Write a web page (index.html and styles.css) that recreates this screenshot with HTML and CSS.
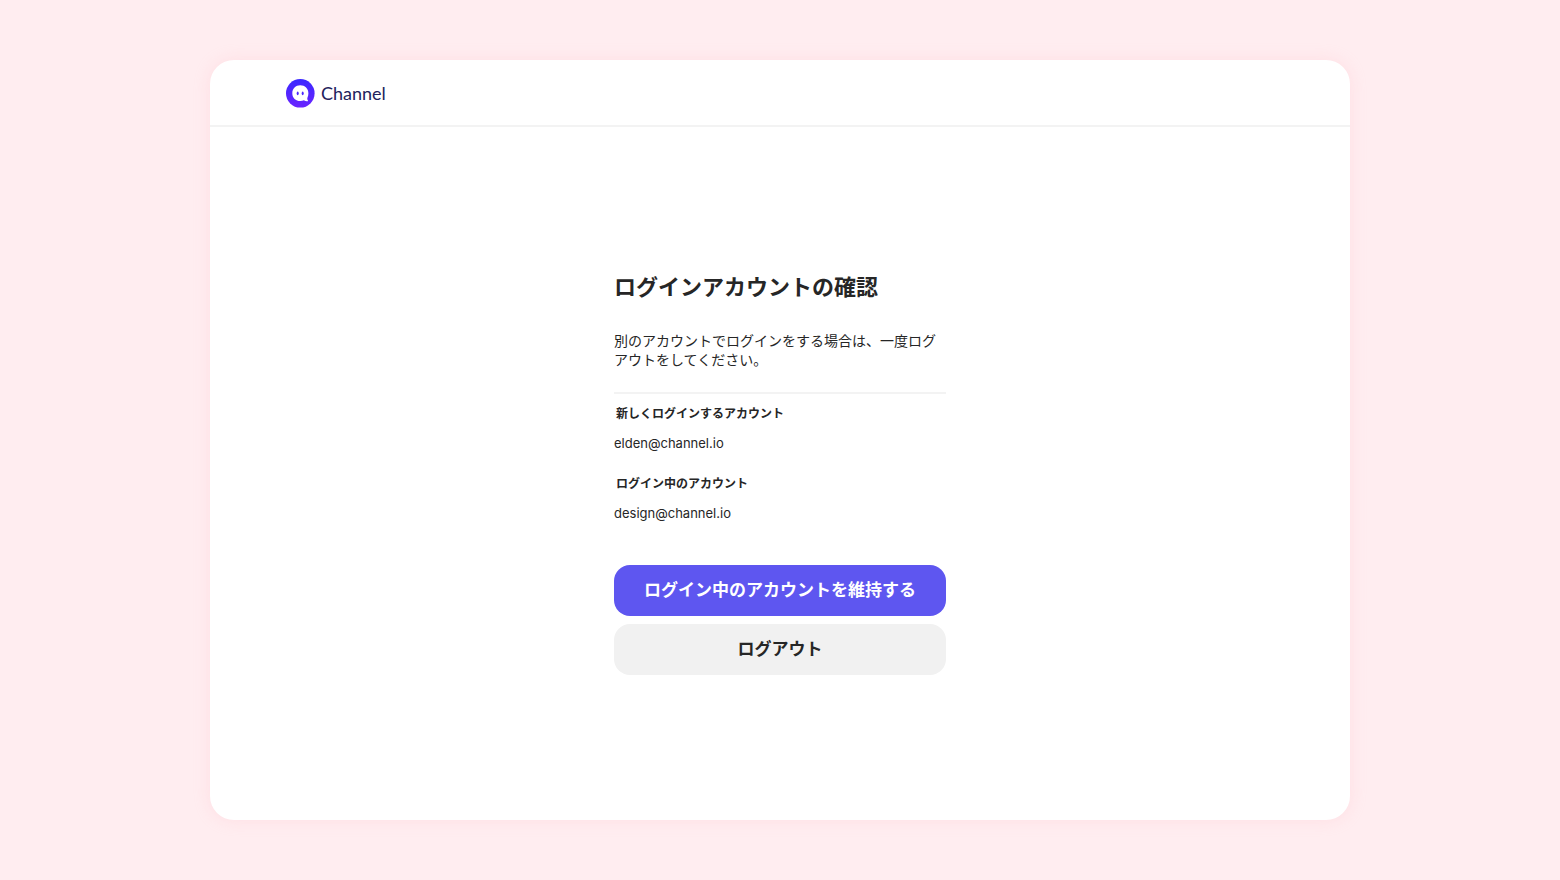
FILE: index.html
```html
<!DOCTYPE html>
<html lang="ja">
<head>
    <meta charset="UTF-8">
    <meta name="viewport" content="width=device-width, initial-scale=1.0">
    <title>ログインアカウントの確認</title>
    <link rel="stylesheet" href="styles.css">
</head>
<body>

<div class="card">
    <header class="header">
        <a class="logo" href="#">
            <svg class="logo-mark" viewBox="0 0 29 29" aria-hidden="true">
                <defs>
                    <linearGradient id="mark" x1="0" y1="0" x2="0" y2="1">
                        <stop offset="0" stop-color="#3a28ff"/>
                        <stop offset="1" stop-color="#6a24ff"/>
                    </linearGradient>
                </defs>
                <circle cx="14.3" cy="14.3" r="14.3" fill="url(#mark)"/>
                <path d="M14.3 6.3C9.7 6.3 6.3 9.7 6.3 14.2s3.4 7.9 8 7.9c1.4 0 2.5-.3 3.6-.8 1.1.8 2.4 1.2 3.7 1 .5-.1.6-.5.3-.9-.6-.8-.8-1.7-.4-2.8.6-1.3.9-2.8.9-4.4 0-4.500-3.500-7.900-8.100-7.900z" fill="#fff"/>
                <ellipse cx="11.7" cy="14.3" rx="1" ry="1.9" fill="#4b27ff"/>
                <ellipse cx="16.7" cy="14.3" rx="1" ry="1.9" fill="#4b27ff"/>
            </svg>
            <span class="logo-text">Channel</span>
        </a>
    </header>

    <main class="main">
        <div class="confirm">
            <h1>ログインアカウントの確認</h1>
            <p class="description">別のアカウントでログインをする場合は、一度ログアウトをしてください。</p>

            <dl class="accounts">
                <dt>新しくログインするアカウント</dt>
                <dd>elden@channel.io</dd>
                <dt>ログイン中のアカウント</dt>
                <dd>design@channel.io</dd>
            </dl>

            <div class="actions">
                <button type="button" class="btn btn-primary">ログイン中のアカウントを維持する</button>
                <button type="button" class="btn btn-secondary">ログアウト</button>
            </div>
        </div>
    </main>
</div>

</body>
</html>
```
FILE: styles.css
```css
* {
    margin: 0;
    padding: 0;
    box-sizing: border-box;
}
body {
    display: flex;
    justify-content: center;
    min-height: 100vh;
    padding: 60px 24px;
    background-color: #ffedf0;
    color: #262626;
    font-family: Inter, "Noto Sans CJK JP", sans-serif;
}
.card {
    display: flex;
    flex-direction: column;
    width: 100%;
    max-width: 1140px;
    background-color: #fff;
    border-radius: 24px;
    box-shadow: 0 0 16px rgba(255, 190, 200, 0.3);
}

/* ヘッダー */
.header {
    padding: 19px 76px 17px;
    border-bottom: 2px solid #f3f3f3;
}
.logo {
    display: inline-flex;
    align-items: center;
    gap: 6px;
    color: #22225c;
    text-decoration: none;
    vertical-align: top;
}
.logo-mark {
    width: 29px;
    height: 29px;
}
.logo-text {
    font-family: Lato, sans-serif;
    font-size: 18px;
    line-height: 29px;
}

/* アカウント確認 */
.main {
    flex: 1;
    display: flex;
    justify-content: center;
    align-items: center;
    padding: 24px 24px 26px;
}
.confirm {
    width: 100%;
    max-width: 332px;
}
h1 {
    font-size: 22px;
    line-height: 32px;
    font-weight: 700;
}
.description {
    margin-top: 28px;
    font-size: 14px;
    line-height: 19px;
}
.accounts {
    margin-top: 23px;
    padding-top: 10px;
    border-top: 2px solid #f3f3f3;
}
.accounts dt {
    padding-left: 2px;
    font-size: 12px;
    line-height: 20px;
    font-weight: 700;
}
.accounts dd {
    margin-top: 8px;
    font-size: 13px;
    line-height: 22px;
}
.accounts dd + dt {
    margin-top: 20px;
}
.actions {
    display: flex;
    flex-direction: column;
    gap: 8px;
    margin-top: 41px;
}
.btn {
    width: 100%;
    padding: 13px 16px;
    border: none;
    border-radius: 16px;
    font-family: inherit;
    font-size: 17px;
    line-height: 25px;
    font-weight: 700;
    cursor: pointer;
}
.btn-primary {
    background-color: #5e56f0;
    color: #fff;
}
.btn-secondary {
    background-color: #f1f1f1;
    color: #262626;
}
```
